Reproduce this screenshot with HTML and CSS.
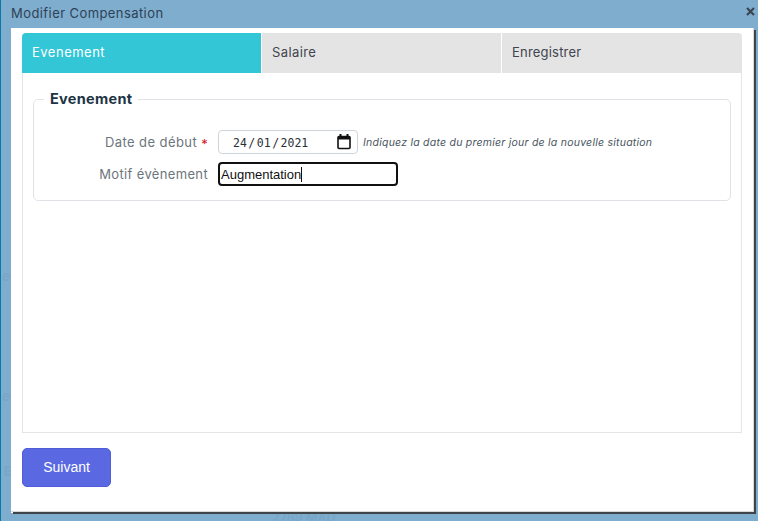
FILE: index.html
```html
<!DOCTYPE html>
<html lang="fr">
<head>
<meta charset="utf-8">
<title>Modifier Compensation</title>
<link rel="stylesheet" href="styles.css">
</head>
<body>
<span class="ghost ghost-a">er</span>
<span class="ghost ghost-b">er</span>
<span class="ghost ghost-c">E</span>
<span class="ghost ghost-d">2789 MAD</span>
<div class="dialog">
  <header class="titlebar">
    <span class="title">Modifier Compensation</span>
    <svg class="close" width="9" height="9" viewBox="0 0 9 9"><path d="M1 1l7 7M8 1l-7 7" stroke="#3d4650" stroke-width="2.2" fill="none"/></svg>
  </header>
  <main class="panel">
    <nav class="tabs">
      <div class="tab active">Evenement</div>
      <div class="tab tab-salaire">Salaire</div>
      <div class="tab">Enregistrer</div>
    </nav>
    <section class="content">
      <fieldset class="group">
        <legend>Evenement</legend>
        <div class="row">
          <label class="label"><span class="label-date">Date de début</span> <span class="req">*</span></label>
          <div class="date">
            <span class="date-text">24<span class="sep">/</span>01<span class="sep">/</span>2021</span>
            <svg class="cal" width="14" height="16" viewBox="0 0 14 16"><path d="M3.5 0v2.5M10.5 0v2.5" stroke="#111" stroke-width="2" fill="none"/><rect x="1" y="2.5" width="12" height="12" rx="1" fill="none" stroke="#111" stroke-width="1.6"/><rect x="1" y="2.5" width="12" height="3" fill="#111"/></svg>
          </div>
          <span class="hint">Indiquez la date du premier jour de la nouvelle situation</span>
        </div>
        <div class="row">
          <label class="label">Motif évènement</label>
          <div class="text-field"><span>Augmentation</span><i class="caret"></i></div>
        </div>
      </fieldset>
    </section>
    <div class="actions"><button class="next" type="button">Suivant</button></div>
  </main>
</div>
</body>
</html>
```
FILE: styles.css
```css
* { box-sizing: border-box; }
html, body { margin: 0; height: 100%; }
body {
  width: 758px;
  height: 521px;
  overflow: hidden;
  position: relative;
  background: #7fadce;
  font-family: Inter, "Open Sans", sans-serif;
  border-left: 1px solid #0a78a8;
}
.ghost {
  position: absolute;
  color: #78a6c7;
  font-size: 13px;
  font-weight: 600;
}
.ghost-a { left: 1px; top: 268px; }
.ghost-b { left: 1px; top: 388px; }
.ghost-c { left: 3px; top: 463px; }
.ghost-d { left: 271px; top: 510px; font-size: 12.5px; }
.dialog {
  position: absolute;
  left: 0;
  top: 0;
  width: 757px;
  height: 521px;
  display: flex;
  flex-direction: column;
}
.titlebar {
  height: 28px;
  flex: none;
  display: flex;
  justify-content: space-between;
  padding: 5px 3px 0 10px;
}
.title {
  font-size: 13px;
  line-height: 17px;
  letter-spacing: 0.42px;
  color: #2e4257;
}
.close { margin-top: 2px; }
.panel {
  margin-left: 10px;
  width: 743px;
  height: 484px;
  flex: none;
  background: #fff;
  box-shadow: 2px 2px 0 #3f4447, 0 1px 0 #fff;
  padding: 5px 11px 0;
  display: flex;
  flex-direction: column;
  border-right: 1px solid #d8d8d8;
  border-bottom: 1px solid #d8d8d8;
}
.tabs {
  display: flex;
  height: 40px;
  flex: none;
  width: 720px;
  gap: 1px;
  background: #fff;
  border-radius: 4px 4px 0 0;
  overflow: hidden;
}
.tab {
  width: 239px;
  flex: none;
  background: #e4e4e4;
  color: #41454f;
  font-size: 13px;
  line-height: 39px;
  letter-spacing: 0.2px;
  padding-left: 10px;
}
.tab.active {
  background: #32c6d6;
  color: #fff;
  letter-spacing: 0.5px;
}
.tab-salaire { letter-spacing: 0.4px; }
.tab:last-child { flex: 1; }
.content {
  width: 720px;
  height: 360px;
  flex: none;
  border: 1px solid #e5e5e5;
  border-top: 0;
  padding: 17px 10px 0;
}
.group {
  margin: 0;
  width: 698px;
  height: 111px;
  padding: 22px 0 0;
  border: 1px solid #dfe3e7;
  border-radius: 5px;
}
.group legend {
  margin-left: 10px;
  padding: 0 6px;
  font-size: 14.5px;
  line-height: 18px;
  font-weight: 700;
  letter-spacing: 0.3px;
  color: #1d3444;
}
.row {
  display: flex;
  align-items: center;
  height: 24px;
  margin-bottom: 8px;
}
.label {
  width: 184px;
  flex: none;
  padding-right: 10px;
  text-align: right;
  font-size: 13px;
  letter-spacing: 0.35px;
  color: #6c757d;
}
.label-date { letter-spacing: 0.42px; }
.req {
  color: #d8141c;
  position: relative;
  top: 2px;
}
.date {
  width: 140px;
  height: 24px;
  flex: none;
  border: 1px solid #ced4da;
  border-radius: 4px;
  display: flex;
  align-items: center;
  justify-content: space-between;
  padding: 0 6px 0 14px;
  background: #fff;
}
.date-text {
  font-family: "DejaVu Sans Mono", monospace;
  font-size: 11.5px;
  line-height: 16px;
  padding-top: 1px;
  color: #2a2f36;
  white-space: nowrap;
}
.sep { margin: 0 1.5px; }
.hint {
  margin-left: 5px;
  font-size: 10.5px;
  font-style: italic;
  letter-spacing: 0.24px;
  color: #4a5560;
  white-space: nowrap;
}
.text-field {
  width: 180px;
  height: 24px;
  flex: none;
  border: 2px solid #101010;
  border-radius: 4px;
  display: flex;
  align-items: center;
  padding-left: 1px;
  font-family: "Liberation Sans", Arial, sans-serif;
  font-size: 13px;
  color: #111;
}
.caret {
  width: 1px;
  height: 15px;
  background: #111;
}
.actions { margin-top: 15px; }
.next {
  width: 89px;
  height: 39px;
  display: block;
  background: #5a69e2;
  border: 1px solid #4f5ed8;
  border-radius: 5px;
  color: #fff;
  font-family: "Liberation Sans", Arial, sans-serif;
  font-size: 14px;
  padding: 0 0 2px;
}
```
